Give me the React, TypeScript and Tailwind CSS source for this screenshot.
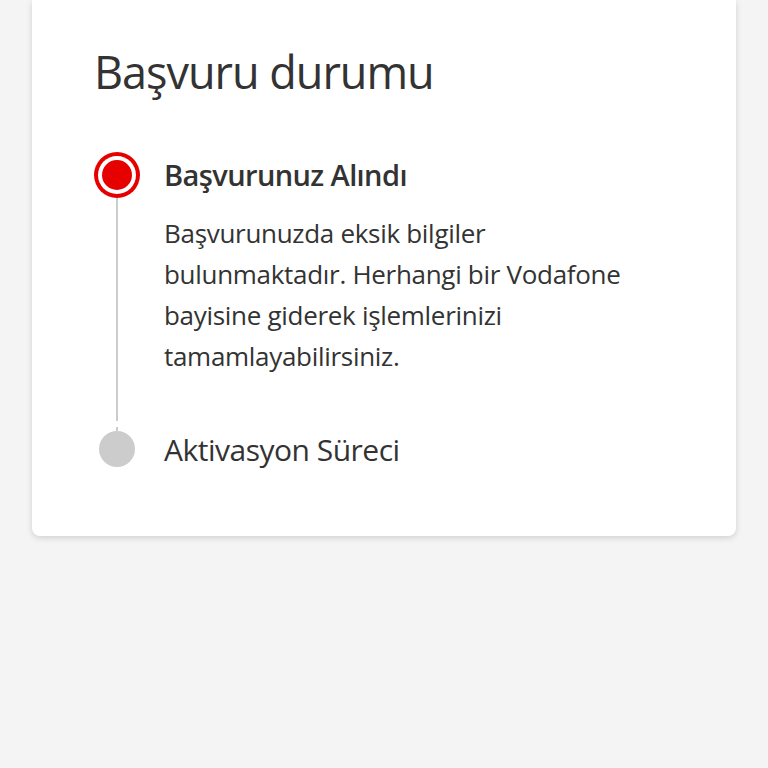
import React from "react";

const steps = [
  {
    title: "Başvurunuz Alındı",
    body: "Başvurunuzda eksik bilgiler bulunmaktadır. Herhangi bir Vodafone bayisine giderek işlemlerinizi tamamlayabilirsiniz.",
    active: true,
  },
  { title: "Aktivasyon Süreci", active: false },
];

function Dot({ active }: { active: boolean }) {
  if (active) {
    return (
      <div className="w-[46px] h-[46px] rounded-full bg-[#e60000] flex items-center justify-center">
        <div className="w-[38px] h-[38px] rounded-full bg-white flex items-center justify-center">
          <div className="w-[30px] h-[30px] rounded-full bg-[#e60000]" />
        </div>
      </div>
    );
  }
  return <div className="w-[36px] h-[36px] rounded-full bg-[#cccccc]" />;
}

export default function App() {
  return (
    <div
      className="min-h-[768px] bg-[#f4f4f4] px-8 text-[#333333]"
      style={{ fontFamily: '"Open Sans", "Noto Sans", sans-serif' }}
    >
      <div className="bg-white rounded-b-lg shadow-[0_2px_6px_rgba(0,0,0,0.15)] pl-[62px] pr-10 pt-[38px] pb-[63px]">
        <h1 className="text-[45px] leading-[68px] tracking-[-1px]">Başvuru durumu</h1>
        <div className="mt-[46px] flex flex-col">
          {/* completed step */}
          <div className="flex gap-[24px]">
            <div className="w-[46px] flex flex-col items-center shrink-0">
              <Dot active />
              <div className="w-[2px] bg-[#cccccc] flex-1" />
            </div>
            <div className="pb-[44px]">
              <div className="text-[29px] leading-[46px] font-semibold tracking-[-0.6px]">
                {steps[0].title}
              </div>
              <p className="mt-[15px] text-[26px] leading-[41px] max-w-[480px] tracking-[-0.3px]">
                {steps[0].body}
              </p>
            </div>
          </div>
          {/* pending step */}
          <div className="flex items-center gap-[24px]">
            <div className="w-[46px] flex flex-col items-center shrink-0">
              <div className="w-[2px] h-[4px] bg-[#cccccc]" />
              <Dot active={false} />
            </div>
            <div className="text-[30px] leading-[46px] tracking-[-0.5px] mt-[6px]">{steps[1].title}</div>
          </div>
        </div>
      </div>
    </div>
  );
}
